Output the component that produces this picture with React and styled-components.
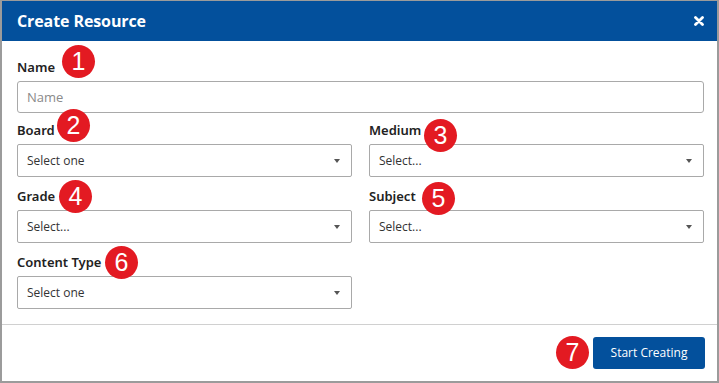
import React from 'react';
import styled, { createGlobalStyle } from 'styled-components';

const GlobalStyle = createGlobalStyle`
    html, body {
        margin: 0;
        padding: 0;
        background: #ffffff;
    }
    body {
        font-family: "Open Sans", "Noto Sans", Arial, sans-serif;
    }
`;

const Modal = styled.div`
    width: 719px;
    height: 383px;
    box-sizing: border-box;
    border: 2px solid #9b9b9b;
    border-top-width: 1px;
    display: flex;
    flex-direction: column;
    background: #fff;
`;

const Header = styled.div`
    height: 40px;
    background: #03509c;
    display: flex;
    align-items: center;
    justify-content: space-between;
    padding: 0 12px 0 15px;
    flex-shrink: 0;
`;

const Title = styled.h2`
    margin: 0;
    color: #fff;
    font-size: 16px;
    font-weight: 700;
    letter-spacing: -0.1px;
`;

const CloseButton = styled.button`
    border: none;
    background: none;
    padding: 0;
    width: 12px;
    height: 12px;
    display: flex;
    align-items: center;
    justify-content: center;
    cursor: pointer;
`;

const Body = styled.div`
    padding: 17px 13px 0 15px;
    height: 284px;
    box-sizing: border-box;
    border-bottom: 1px solid #d0d0d0;
    flex-shrink: 0;
`;

const Grid = styled.div`
    display: grid;
    grid-template-columns: 1fr 1fr;
    column-gap: 17px;
`;

const Field = styled.div`
    margin-bottom: ${props => props.gap || 10}px;
    grid-column: ${props => props.wide ? '1 / span 2' : 'auto'};
`;

const Label = styled.label`
    position: relative;
    display: block;
    height: 18px;
    line-height: 18px;
    margin-bottom: 5px;
    font-family: "Noto Sans", "Open Sans", sans-serif;
    font-size: 13px;
    font-weight: 600;
    color: #222;
`;

const Badge = styled.span`
    position: absolute;
    left: ${props => props.x}px;
    top: ${props => props.y}px;
    width: 33px;
    height: 33px;
    border-radius: 50%;
    background: #e31a22;
    color: #fff;
    font-family: "Liberation Sans", Arial, sans-serif;
    font-size: 25px;
    font-weight: 400;
    line-height: 33px;
    text-align: center;
    z-index: 2;
`;

const FooterBadge = styled(Badge)`
    position: static;
    display: inline-block;
    flex-shrink: 0;
`;

const TextInput = styled.input`
    display: block;
    width: 100%;
    height: 32px;
    box-sizing: border-box;
    border: 1px solid #a9a9a9;
    border-radius: 3px;
    padding: 0 9px;
    font-family: inherit;
    font-size: 13px;
    color: #333;
    outline: none;
    &::placeholder {
        color: #8a8a8a;
    }
`;

const SelectBox = styled.div`
    height: 33px;
    box-sizing: border-box;
    border: 1px solid #a9a9a9;
    border-radius: 2px;
    padding: 0 11px 0 9px;
    display: flex;
    align-items: center;
    justify-content: space-between;
    font-size: 12px;
    color: #333;
    background: #fff;
`;

const Caret = styled.span`
    width: 0;
    height: 0;
    border-left: 3px solid transparent;
    border-right: 3px solid transparent;
    border-top: 4px solid #555;
`;

const Footer = styled.div`
    flex: 1;
    display: flex;
    align-items: center;
    justify-content: flex-end;
    gap: 4px;
    padding: 0 12px 1px 0;
`;

const PrimaryButton = styled.button`
    width: 112px;
    height: 32px;
    border: none;
    border-radius: 3px;
    background: #03509c;
    color: #fff;
    font-family: inherit;
    font-size: 12px;
    font-weight: 500;
    cursor: pointer;
`;

const Select = ({ text }) => (
    <SelectBox>
        <span>{text}</span>
        <Caret />
    </SelectBox>
);

const CloseIcon = () => (
    <svg width="10" height="10" viewBox="0 0 10 10">
        <path d="M1.5 1.5 L8.5 8.5 M8.5 1.5 L1.5 8.5" stroke="#fff" strokeWidth="2.8" strokeLinecap="round" />
    </svg>
);

const App = () => {
    return (
        <>
            <GlobalStyle />
            <Modal>
                <Header>
                    <Title>Create Resource</Title>
                    <CloseButton aria-label="close"><CloseIcon /></CloseButton>
                </Header>
                <Body>
                    <Grid>
                        <Field wide gap={8}>
                            <Label>Name<Badge x={45} y={-13}>1</Badge></Label>
                            <TextInput placeholder="Name" />
                        </Field>
                        <Field>
                            <Label>Board<Badge x={40} y={-12}>2</Badge></Label>
                            <Select text="Select one" />
                        </Field>
                        <Field>
                            <Label>Medium<Badge x={55} y={-2}>3</Badge></Label>
                            <Select text="Select..." />
                        </Field>
                        <Field>
                            <Label>Grade<Badge x={42} y={-7}>4</Badge></Label>
                            <Select text="Select..." />
                        </Field>
                        <Field>
                            <Label>Subject<Badge x={53} y={-5}>5</Badge></Label>
                            <Select text="Select..." />
                        </Field>
                        <Field>
                            <Label>Content Type<Badge x={88} y={-7}>6</Badge></Label>
                            <Select text="Select one" />
                        </Field>
                    </Grid>
                </Body>
                <Footer>
                    <FooterBadge>7</FooterBadge>
                    <PrimaryButton>Start Creating</PrimaryButton>
                </Footer>
            </Modal>
        </>
    );
};

export default App;
